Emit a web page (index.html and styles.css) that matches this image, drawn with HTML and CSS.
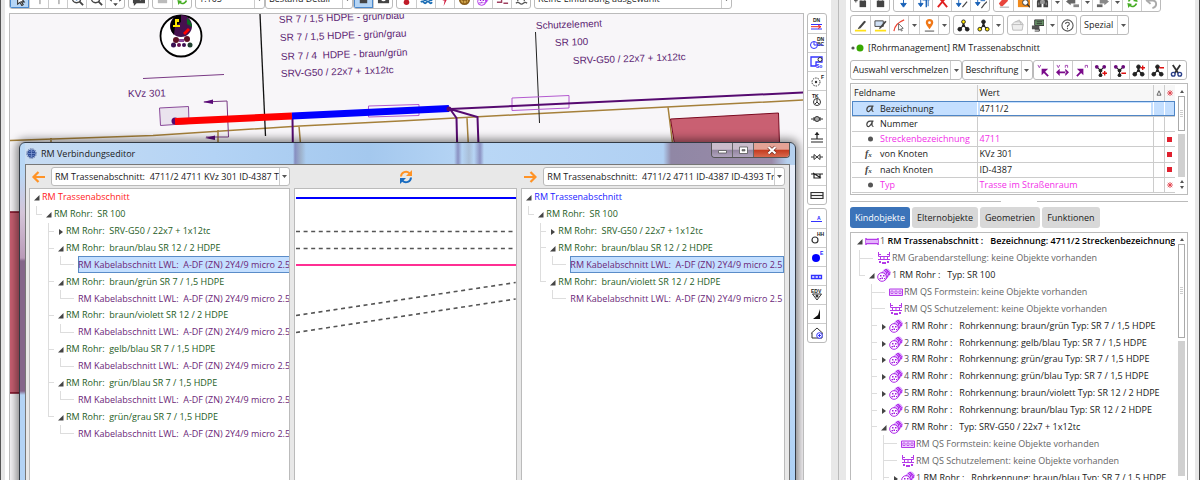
FILE: index.html
```html
<!DOCTYPE html>
<html lang="de">
<head>
<meta charset="utf-8">
<title>RM Verbindungseditor</title>
<link rel="stylesheet" href="styles.css">
</head>
<body>
<svg class="defs" aria-hidden="true">
  <defs>
    <symbol id="down" viewBox="0 0 5 3"><path d="M0 0h5L2.500 3z" fill="#555"/></symbol>
    <symbol id="open" viewBox="0 0 6 6"><path d="M5.500 0v5.500H0z" fill="#444"/></symbol>
    <symbol id="closed" viewBox="0 0 6 6"><path d="M1 0l4 3-4 3z" fill="#444"/></symbol>
    <symbol id="pipe" viewBox="0 0 14 14"><path d="M1 8L7 1.500Q10-.5 12.500 2T13 7l-5 6z" fill="#d9a0ff"/><path d="M5 4l2 2M7 2l3 3M9 1l3 3M4 5l7 4M8 1l5 6M11 3l-3 5M13 4l-4 7" stroke="#b02be8" stroke-width="1"/><circle cx="5" cy="9" r="4.300" fill="#fff" stroke="#b02be8" stroke-width="1"/><path d="M3 7h1.500v1.500H3zM6 7h1.500v1.500H6zM4.500 9.500H6V11H4.500zM2.500 10H4v1.200H2.500zM7 10h1v1H7z" fill="#a21be0"/></symbol>
    <symbol id="trasse" viewBox="0 0 14 14"><path d="M1 4v7M13 4v7M1 5.500h12M1 9.500h12" stroke="#b43ae8" stroke-width="1.500"/><path d="M1 6h12v3H1z" fill="#e3b3fb"/></symbol>
    <symbol id="graben" viewBox="0 0 14 14"><path d="M1.500 1v4.500h11V1M1 8.500h12" fill="none" stroke="#b43ae8"/><path d="M3 6h1v2H3zM6.500 6h1v2h-1zM10 6h1v2h-1zM2 10h2v2H2zM5 11h4v2H5zM10 10h2v2h-2zM1 3h3v1H1zM10 3h3v1h-3z" fill="#b43ae8"/></symbol>
    <symbol id="form" viewBox="0 0 14 14"><path d="M.5 4h13v6.500H.5z" fill="#f0d4ff" stroke="#b43ae8"/><path d="M2 6h2v2.500H2zM6 6h2v2.500H6zM10 6h2v2.500h-2z" fill="#fff" stroke="#b43ae8" stroke-width=".8"/></symbol>
    <symbol id="spin" viewBox="0 0 14 14"><path d="M2 6a5 5 0 0 1 8-3l1.500-2 1 5.500-5-1 1.300-1.200A3 3 0 0 0 4 6zM12 8a5 5 0 0 1-8 3l-1.500 2-1-5.500 5 1-1.300 1.200A3 3 0 0 0 10 8z" fill="#46ad24"/></symbol>
    <symbol id="nodes" viewBox="0 0 14 14"><path d="M7 3v4L3 11M7 7l4 4" fill="none" stroke="#222" stroke-width="1.200"/><circle cx="7" cy="3" r="2" class="n1"/><circle cx="7" cy="7" r="1.600" fill="#222"/><circle cx="3" cy="11" r="2" class="n2"/><circle cx="11" cy="11" r="2" class="n2"/></symbol>
    <symbol id="alpha" viewBox="0 0 10 8"><path d="M8.500 1.200H5Q2 1.500 1.800 4.500 2 7 4 6.500 6 5.500 7.500 1.200 6 6.500 8.500 6.500" fill="none" stroke="#444" stroke-width="1.200"/></symbol>
    <symbol id="star" viewBox="0 0 6 6"><path d="M3 0v6M0 3h6M.8.8l4.400 4.400M5.200.8L.8 5.200" stroke="#e0343f" stroke-width=".8"/></symbol>
  </defs>
</svg>

<div class="app">
  <main class="workspace">
    <div class="work">
      <div class="topbar">
        <div class="group">
          <button class="on" aria-label="Auswählen"><svg viewBox="0 0 14 14"><path d="M5 1v11l2.500-2 2 3.500 1.500-1L9 9.500h3z" fill="#fff" stroke="#333" stroke-width="1.200"/></svg></button>
          <button aria-label="Punkt"><svg viewBox="0 0 14 14"><path d="M7.500 1v11" stroke="#777"/></svg></button>
          <button aria-label="Linie"><svg viewBox="0 0 14 14"><path d="M7.500 1v11" stroke="#777"/></svg></button>
          <button aria-label="Vergrößern"><svg viewBox="0 0 14 14"><circle cx="6" cy="6" r="4.500" fill="#fff" stroke="#444" stroke-width="1.400"/><path d="M9 9l4 4" stroke="#444" stroke-width="2"/><path d="M6 4v4M4 6h4" stroke="#1769c4" stroke-width="1.500"/></svg></button>
          <button aria-label="Zoom"><svg viewBox="0 0 14 14"><circle cx="6" cy="6" r="4.500" fill="#fff" stroke="#444" stroke-width="1.400"/><path d="M9 9l4 4" stroke="#444" stroke-width="2"/></svg></button>
          <button aria-label="Verschieben"><svg viewBox="0 0 14 14"><path d="M7 0l2.500 3h-5zM7 14l-2.500-3h5zM0 7l3-2.500v5zM14 7l-3 2.500v-5z" fill="#444"/></svg></button>
        </div>
        <div class="group g1"><button aria-label="Kommentar"><svg viewBox="0 0 14 14"><path d="M1 1h13v10H5l-3 3v-3H1z" fill="#444"/><path d="M9 4v4M7 6h4" stroke="#fff"/></svg></button></div>
        <div class="group g1"><button aria-label="Stopp"><svg viewBox="0 0 14 14"><path d="M2 2h10v9H2z" fill="#bbb"/></svg></button><button aria-label="Aktualisieren"><svg><use href="#spin"/></svg></button></div>
        <div class="combo c1"><select aria-label="Maßstab"><option>1:105</option></select><span class="drop"><svg><use href="#down"/></svg></span></div>
        <div class="combo c2"><select aria-label="Ansicht"><option>Bestand Detail</option></select><span class="drop"><svg><use href="#down"/></svg></span></div>
        <div class="group"><button class="on" aria-label="Ebene"><svg viewBox="0 0 14 14"><path d="M3 2h8v9H3z" fill="#444"/></svg></button><button aria-label="Kamera"><svg viewBox="0 0 14 14"><path d="M1 2h12v9H1z" fill="#444"/><circle cx="7" cy="6.500" r="2.500" fill="#fff"/><circle cx="7" cy="6.500" r="1" fill="#444"/></svg></button></div>
        <div class="group g1">
          <button aria-label="Wärme"><svg viewBox="0 0 14 14"><path d="M7 0v8" stroke="#c01c28" stroke-width="3"/><circle cx="7" cy="10" r="3" fill="#c01c28"/></svg></button>
          <button aria-label="Wasser"><svg viewBox="0 0 14 14"><path d="M1 7q1.500-2 3 0t3 0 3 0 3 0M1 10q1.500-2 3 0t3 0 3 0 3 0" fill="none" stroke="#1a6db5" stroke-width="2"/></svg></button>
          <button aria-label="Strom"><svg viewBox="0 0 14 14"><path d="M10 0L7 6h2l-4 8 1-6H4l3-8z" fill="#d02040"/></svg></button>
          <button aria-label="Kanal"><svg viewBox="0 0 14 14"><circle cx="7" cy="7" r="5" fill="#cfa44a" stroke="#8b5e1a" stroke-width="2"/><path d="M4 5h6M4 8h6M6 4v7M9 4v7" stroke="#805010" stroke-width=".7"/></svg></button>
          <button aria-label="Rohr"><svg><use href="#pipe"/></svg></button>
          <button aria-label="Trasse"><svg viewBox="0 0 14 14"><path d="M1 10h5V5h4M8 11h5M3 6h2" stroke="#a04060" fill="none" stroke-width="1.500"/></svg></button>
          <button aria-label="Schnitt"><svg viewBox="0 0 14 14"><path d="M1 5h12M3 5v4M10 5v4M1 11q2-2 4 0t4 0 4 0" fill="none" stroke="#555" stroke-width="1.300"/></svg></button>
        </div>
        <div class="combo c3"><select aria-label="Einfärbung"><option>Keine Einfärbung ausgewählt</option></select><span class="drop"><svg><use href="#down"/></svg></span></div>
      </div>

      <div class="stage">
        <div class="map">
          <svg class="plan" role="img" aria-label="Lageplan">
            <g transform="translate(-10 -14)" fill="none">
              <path d="M10 140.500L153 135.500 300 126 400 121 520 114.500 804 100M51 138v24M218 130v34M299 126l3 36M467 118l2 40M668 107l5 40" stroke="#a5803a" stroke-width="1.500"/>
              <path d="M670.500 119L778.500 113 780 160H677z" fill="#c96072" stroke="#7a0a20"/>
              <path d="M0 212h24v181H0z" fill="#c96072" stroke="#7a0a20" stroke-width="1.500"/>
              <path d="M260 14L265.500 136" stroke="#111" stroke-width="1.300"/>
              <path d="M535.500 32L539.500 123" stroke="#222"/>
              <path d="M143 78.500L224 74.500" stroke="#7a3a85"/>
              <path d="M159.500 108L188.500 106.500 189 123.500 160.500 125.500z" fill="#eae3ee" stroke="#8a4a9a"/>
              <path d="M204 102L227 101 228.500 137H206" stroke="#7a3a85"/>
              <path d="M203 102l10-2.500v4.500zM205 138l10-2.500v4.500z" fill="#5a0a78"/>
              <path d="M512 98L569 95.500V108L512 110.500zM368.500 106L419 104.500V115.500L368.500 117z" stroke="#b45ad0"/>
              <path d="M450 109L804 92.500" stroke="#560a70" stroke-width="2"/>
              <path d="M292.500 118L293 160M450 109L456.500 118 457.500 160M450 109L477.500 117 479 160" stroke="#560a70" stroke-width="2"/>
              <circle cx="175" cy="121" r="3.500" fill="#560a70"/>
              <path d="M175 121.500L292 116" stroke="#f00" stroke-width="7"/>
              <path d="M292 116L449 108.500" stroke="#00f" stroke-width="7"/>
              <circle cx="449" cy="109" r="2.500" fill="#560a70"/>
              <circle cx="181" cy="36" r="20.500" fill="#fff" stroke="#000" stroke-width="1.800"/>
              <circle cx="181" cy="26" r="11" fill="#47104f"/>
              <path d="M171 22q4-8 10-7v7l-6 4-1 9q-5-5-3-13z" fill="#000"/>
              <path d="M175 19h4v3h-2v3h3v2h-7v-2h2z" fill="#ffe600"/><path d="M187 18q5 4 5 9l-5-3z" fill="#0a6a20"/><path d="M183 33l5-5 2 2-5 5z" fill="#f00"/>
              <path d="M176 37h10v6h-10z" fill="#fff"/><circle cx="176" cy="40" r="3" fill="#5e1025"/><circle cx="187" cy="39" r="3" fill="#5e1025"/>
              <path d="M179 39h5v3h-5z" fill="#8a4a9a"/><circle cx="173.500" cy="45" r="2.500" fill="#3a1050"/><circle cx="179" cy="45" r="2" fill="#6a1050"/><circle cx="184" cy="45" r="2" fill="#3a1050"/><circle cx="190" cy="45" r="2.500" fill="#204030"/>
              <g class="maptext">
                <text transform="translate(279 23) rotate(-2)">SR 7 / 1,5 HDPE - grün/blau</text>
                <text transform="translate(280 41) rotate(-2)">SR 7 / 1,5 HDPE - grün/grau</text>
                <text transform="translate(281 60) rotate(-2)" xml:space="preserve">SR 7 / 4  HDPE - braun/grün</text>
                <text transform="translate(281 77) rotate(-2)">SRV-G50 / 22x7 + 1x12tc</text>
                <text transform="translate(128 97) rotate(-1)">KVz 301</text>
                <text transform="translate(536 29) rotate(-2)">Schutzelement</text>
                <text transform="translate(555 46) rotate(-2)">SR 100</text>
                <text transform="translate(573 64) rotate(-2)">SRV-G50 / 22x7 + 1x12tc</text>
              </g>
            </g>
          </svg>

          <section class="dialog" aria-label="RM Verbindungseditor">
            <header class="titlebar">
              <svg class="logo" viewBox="0 0 12 12"><circle cx="6" cy="6" r="4.500" fill="#2c4a94"/><circle cx="6" cy="6" r="5.200" fill="none" stroke="#40508a" stroke-dasharray="1 1"/><path d="M3 4q3-2 6 0M2 6h8M3 8q3 2 6 0M6 2v8" fill="none" stroke="#8aa4dc" stroke-width=".7"/></svg>
              <h1>RM Verbindungseditor</h1>
              <div class="winctl">
                <button aria-label="Minimieren"><svg viewBox="0 0 20 14"><path d="M6.500 7.500h8v2.500h-8z" fill="#fff" stroke="#555" stroke-width=".8"/></svg></button>
                <button aria-label="Maximieren"><svg viewBox="0 0 20 14"><path d="M6.500 4h8v6.500h-8z" fill="#fff" stroke="#555" stroke-width=".8"/><path d="M9 6.500h3v1.500H9z" fill="#777" stroke="#555" stroke-width=".6"/></svg></button>
                <button class="x" aria-label="Schließen"><svg viewBox="0 0 20 14"><path d="M6.500 4l7 6.500M13.500 4l-7 6.500" stroke="#6b2a22" stroke-width="3.400"/><path d="M6.500 4l7 6.500M13.500 4l-7 6.500" stroke="#fff" stroke-width="2.200"/></svg></button>
              </div>
            </header>
            <div class="panes">
              <div class="pane">
                <div class="pick">
                  <button class="bare" aria-label="Zurück"><svg viewBox="0 0 14 14"><path d="M7.500 2L2.500 7l5 5M3 7h11" fill="none" stroke="#ff9326" stroke-width="2.200"/></svg></button>
                  <div class="combo"><select aria-label="Trassenabschnitt links"><option>RM Trassenabschnitt:&nbsp; 4711/2 4711 KVz 301 ID-4387 T</option></select><span class="drop"><svg><use href="#down"/></svg></span></div>
                </div>
                <div class="box">
                  <ul class="tree t15">
                    <li class="red"><svg><use href="#open"/></svg>RM Trassenabschnitt</li>
                    <li><i class="l"></i><svg><use href="#open"/></svg>RM Rohr:  SR 100</li>
                    <li><i></i><i class="t"></i><svg><use href="#closed"/></svg>RM Rohr:  SRV-G50 / 22x7 + 1x12tc</li>
                    <li><i></i><i class="t"></i><svg><use href="#open"/></svg>RM Rohr:  braun/blau SR 12 / 2 HDPE</li>
                    <li class="leaf sel"><i></i><i class="v"></i><i class="l"></i><i class="h"></i><span>RM Kabelabschnitt LWL:  A-DF (ZN) 2Y4/9 micro 2.5</span></li>
                    <li><i></i><i class="t"></i><svg><use href="#open"/></svg>RM Rohr:  braun/grün SR 7 / 1,5 HDPE</li>
                    <li class="leaf"><i></i><i class="v"></i><i class="l"></i><i class="h"></i><span>RM Kabelabschnitt LWL:  A-DF (ZN) 2Y4/9 micro 2.5</span></li>
                    <li><i></i><i class="t"></i><svg><use href="#open"/></svg>RM Rohr:  braun/violett SR 12 / 2 HDPE</li>
                    <li class="leaf"><i></i><i class="v"></i><i class="l"></i><i class="h"></i><span>RM Kabelabschnitt LWL:  A-DF (ZN) 2Y4/9 micro 2.5</span></li>
                    <li><i></i><i class="t"></i><svg><use href="#open"/></svg>RM Rohr:  gelb/blau SR 7 / 1,5 HDPE</li>
                    <li class="leaf"><i></i><i class="v"></i><i class="l"></i><i class="h"></i><span>RM Kabelabschnitt LWL:  A-DF (ZN) 2Y4/9 micro 2.5</span></li>
                    <li><i></i><i class="t"></i><svg><use href="#open"/></svg>RM Rohr:  grün/blau SR 7 / 1,5 HDPE</li>
                    <li class="leaf"><i></i><i class="v"></i><i class="l"></i><i class="h"></i><span>RM Kabelabschnitt LWL:  A-DF (ZN) 2Y4/9 micro 2.5</span></li>
                    <li><i></i><i class="l"></i><svg><use href="#open"/></svg>RM Rohr:  grün/grau SR 7 / 1,5 HDPE</li>
                    <li class="leaf"><i></i><i></i><i class="l"></i><i class="h"></i><span>RM Kabelabschnitt LWL:  A-DF (ZN) 2Y4/9 micro 2.5</span></li>
                  </ul>
                </div>
              </div>
              <div class="pane">
                <div class="pick mid">
                  <button class="bare" aria-label="Neu verbinden"><svg viewBox="0 0 14 14"><path d="M2 6.500a5 5 0 0 1 8.500-3.300" fill="none" stroke="#ff9326" stroke-width="2"/><path d="M13 0v6H7z" fill="#ff9326"/><path d="M12 7.500a5 5 0 0 1-8.500 3.300" fill="none" stroke="#1a6cc0" stroke-width="2"/><path d="M1 14V8h6z" fill="#1a6cc0"/></svg></button>
                </div>
                <div class="box">
                  <svg class="links" viewBox="0 0 222 160" preserveAspectRatio="none">
                    <path d="M1 9h221" stroke="#00f" stroke-width="2"/>
                    <path d="M1 42.500h220M1 59.500h220M1 126.500L221 93.500M1 143.500L221 110" stroke="#555" stroke-width="1.600" stroke-dasharray="4 3.600"/>
                    <path d="M1 76h221" stroke="#ff2f93" stroke-width="2"/>
                  </svg>
                </div>
              </div>
              <div class="pane">
                <div class="pick">
                  <button class="bare" aria-label="Weiter"><svg viewBox="0 0 14 14"><path d="M7.500 2l5 5-5 5M12 7H1" fill="none" stroke="#ff9326" stroke-width="2.200"/></svg></button>
                  <div class="combo"><select aria-label="Trassenabschnitt rechts"><option>RM Trassenabschnitt:&nbsp; 4711/2 4711 ID-4387 ID-4393 Tr</option></select><span class="drop"><svg><use href="#down"/></svg></span></div>
                </div>
                <div class="box">
                  <ul class="tree t7">
                    <li class="blue"><svg><use href="#open"/></svg>RM Trassenabschnitt</li>
                    <li><i class="l"></i><svg><use href="#open"/></svg>RM Rohr:  SR 100</li>
                    <li><i></i><i class="t"></i><svg><use href="#closed"/></svg>RM Rohr:  SRV-G50 / 22x7 + 1x12tc</li>
                    <li><i></i><i class="t"></i><svg><use href="#open"/></svg>RM Rohr:  braun/blau SR 12 / 2 HDPE</li>
                    <li class="leaf sel"><i></i><i class="v"></i><i class="l"></i><i class="h"></i><span>RM Kabelabschnitt LWL:  A-DF (ZN) 2Y4/9 micro 2.5</span></li>
                    <li><i></i><i class="l"></i><svg><use href="#open"/></svg>RM Rohr:  braun/violett SR 12 / 2 HDPE</li>
                    <li class="leaf"><i></i><i></i><i class="l"></i><i class="h"></i><span>RM Kabelabschnitt LWL:  A-DF (ZN) 2Y4/9 micro 2.5</span></li>
                  </ul>
                </div>
              </div>
            </div>
          </section>
        </div>

        <div class="sidebar">
          <div class="vgroup">
            <button aria-label="DN"><svg viewBox="0 0 16 16"><text x="4" y="6" class="mini">DN</text><path d="M2 8.500h11M2 13h11" stroke="#33f"/><path d="M2 10.700h9M9 9l3 1.700L9 12.500" stroke="#e22" fill="none"/></svg></button>
            <button aria-label="DN Punkt"><svg viewBox="0 0 16 16"><text x="8" y="6" class="mini">DN</text><text x="8" y="11" class="mini">BC</text><circle cx="5" cy="10" r="3.500" fill="#fff" stroke="#33f"/><path d="M5 10h9M5 7v3" stroke="#33f"/></svg></button>
            <button aria-label="Schacht"><svg viewBox="0 0 16 16"><path d="M2 12V3h11v5H7v4z" fill="none" stroke="#33f" stroke-width="1.300"/><circle cx="11" cy="5.500" r="2" fill="#fff" stroke="#333"/><text x="7" y="14" class="mini b">So</text></svg></button>
            <button aria-label="Punkt F"><svg viewBox="0 0 16 16"><circle cx="7" cy="9" r="4" fill="none" stroke="#333" stroke-dasharray="1.500 1"/><circle cx="7" cy="9" r="1.200" fill="#333"/><text x="12" y="6" class="mini">F</text></svg></button>
            <button aria-label="TK"><svg viewBox="0 0 16 16"><text x="3" y="6" class="mini">TK</text><circle cx="8" cy="10" r="3.500" fill="none" stroke="#333"/><path d="M8 7v3l-2 2M8 10l2 2" fill="none" stroke="#333"/></svg></button>
            <button aria-label="Muffe"><svg viewBox="0 0 16 16"><path d="M2 8h12M5 6v4M11 6v4" stroke="#333"/><circle cx="8" cy="8" r="2.500" fill="#aaa" stroke="#333"/></svg></button>
            <button aria-label="Abschluss"><svg viewBox="0 0 16 16"><path d="M2 9h12M2 12h12M8 9V2.500" stroke="#222" stroke-width="1.200"/><path d="M5.500 5L8 2l2.500 3z" fill="#222"/></svg></button>
            <button aria-label="Verbinder"><svg viewBox="0 0 16 16"><path d="M2 8h3M11 8h3" stroke="#333"/><path d="M5 5.500v5L8 8zM11 5.500v5L8 8z" fill="none" stroke="#333"/></svg></button>
            <button aria-label="Trenner"><svg viewBox="0 0 16 16"><path d="M2 6h3v4h6V6h3M4 5l8 5M5 6h6" fill="none" stroke="#222" stroke-width="1.200"/></svg></button>
            <button aria-label="Kasten"><svg viewBox="0 0 16 16"><path d="M2 5.500h12v6H2zM2 8.500h12" fill="#eee" stroke="#333" stroke-width="1.200"/></svg></button>
          </div>
          <div class="vgroup">
            <button aria-label="Linie A"><svg viewBox="0 0 16 16"><text x="8" y="9" class="mini b">A</text><path d="M2 10.500h11" stroke="#33f"/></svg></button>
            <button aria-label="Punkt HH"><svg viewBox="0 0 16 16"><circle cx="6" cy="10" r="3" fill="none" stroke="#333" stroke-width="1.200"/><text x="8" y="6" class="mini">HH</text></svg></button>
            <button aria-label="Punkt E"><svg viewBox="0 0 16 16"><circle cx="7" cy="9" r="4" fill="#00f"/><text x="11" y="6" class="mini b">E</text></svg></button>
            <button aria-label="Trog"><svg viewBox="0 0 16 16"><path d="M2.500 7.500h10v3h-10zM6 7.500v3M9.500 7.500v3" fill="none" stroke="#33f" stroke-width="1.300"/></svg></button>
            <button aria-label="EDV"><svg viewBox="0 0 16 16"><text x="2" y="6" class="mini">EDV</text><path d="M3.500 7h9L8 13z" fill="#fff" stroke="#333"/><circle cx="8" cy="9" r="1.500" fill="#333"/></svg></button>
            <button aria-label="Winkel"><svg viewBox="0 0 16 16"><path d="M11 3v10H4l5-4z" fill="#111"/></svg></button>
            <button aria-label="Haus"><svg viewBox="0 0 16 16"><path d="M3 13V8h-.5L8 3l5.500 5H13v5z" fill="#fff" stroke="#333"/><circle cx="10.500" cy="10.500" r="2.800" fill="#fff" stroke="#33f"/><path d="M9 10.500h3M10.500 9v3" stroke="#33f"/></svg></button>
          </div>
        </div>
      </div>
    </div>
  </main>

  <div class="splitter"></div>

  <aside class="panel">
    <div class="topbar">
      <div class="group">
        <button aria-label="Sperre hinzufügen"><svg viewBox="0 0 14 14"><path d="M6 5h7v7H6z" fill="#444"/><path d="M7.500 5V3h4v2M2 3v4M0 5h4" fill="none" stroke="#444"/></svg></button>
        <button aria-label="Sperre"><svg viewBox="0 0 14 14"><path d="M3 5h8v7H3z" fill="#444"/><path d="M5 5V2h4v3" fill="none" stroke="#444"/></svg></button>
      </div>
      <div class="group g1">
        <button aria-label="Ab"><svg viewBox="0 0 14 14"><path d="M7 0v9M4 8h6l-3 4z" fill="#1a62b8" stroke="#1a62b8"/></svg></button>
        <button aria-label="Ab und auf"><svg viewBox="0 0 14 14"><path d="M4 1v8M1.500 8h5L4 11.500z" fill="#1a62b8" stroke="#1a62b8"/><path d="M6 4h4v8" fill="none" stroke="#1a62b8" stroke-width="1.500"/><path d="M12 2v9M10 4h4l-2-3z" fill="#1a62b8" stroke="#1a62b8"/></svg></button>
        <button aria-label="Löschen"><svg viewBox="0 0 14 14"><path d="M2 0l10 12M12 0L2 12" stroke="#e02020" stroke-width="2"/></svg></button>
        <button aria-label="Ab auf Linie"><svg viewBox="0 0 14 14"><path d="M4 0v9M1.500 8h5L4 11.500z" fill="#1a62b8" stroke="#1a62b8"/><path d="M8 12l5-6" stroke="#444" stroke-width="1.300"/></svg></button>
        <button aria-label="Ab auf Knoten"><svg viewBox="0 0 14 14"><path d="M4 0v8M1.500 7h5L4 10.500zM7 5h5" fill="#1a62b8" stroke="#1a62b8"/><path d="M8 13l3-4 3-3" stroke="#444" fill="none" stroke-width="1.300"/></svg></button>
      </div>
      <div class="group g1">
        <button aria-label="Radieren"><svg viewBox="0 0 14 14"><path d="M2 8l6-7 4 4-6 6H4z" fill="#e8453c"/><path d="M3 12h10" stroke="#999"/></svg></button>
        <button aria-label="Ordner durchsuchen"><svg viewBox="0 0 14 14"><path d="M1 1h13v11H1z" fill="#f08a1c"/><circle cx="9" cy="7" r="3" fill="#fff" stroke="#333"/><path d="M11 9l3 3" stroke="#333" stroke-width="1.500"/></svg></button>
        <button aria-label="Suchen"><svg viewBox="0 0 14 14"><path d="M3 1h3v11H1V6zM8 1h3l2 5v6H8z" fill="#444"/><path d="M5 5h4v3H5zM3 7v3M11 7v3" fill="#999" stroke="#999"/></svg></button>
        <button class="dd" aria-label="Suchoptionen"><svg><use href="#down"/></svg></button>
        <button aria-label="Vorheriges"><svg viewBox="0 0 14 14"><path d="M0 6l5-4v2h5v4H5v2z" fill="#666"/><path d="M8 9h6v3H8z" fill="#888"/></svg></button>
        <button class="dd" aria-label="Vorheriges wählen"><svg><use href="#down"/></svg></button>
        <button aria-label="Nächstes"><svg viewBox="0 0 14 14"><path d="M14 6L9 2v2H4v4h5v2z" fill="#888"/><path d="M1 9h6v3H1z" fill="#666"/></svg></button>
        <button class="dd" aria-label="Nächstes wählen"><svg><use href="#down"/></svg></button>
        <button aria-label="Neu laden"><svg><use href="#spin"/></svg></button>
        <button aria-label="Rückgängig"><svg viewBox="0 0 14 14"><path d="M6 1L2 5l4 3.500M2 5h6q4 0 4 4 0 3-4 4" fill="none" stroke="#aaa" stroke-width="2"/></svg></button>
      </div>
    </div>

    <div class="bar">
      <div class="group">
        <button aria-label="Stift"><svg viewBox="0 0 14 14"><path d="M1 12.500h12" stroke="#ffe11a" stroke-width="2"/><path d="M5 9l6-7 2 1-6 7-3 1z" fill="#444"/></svg></button>
        <button aria-label="Formular"><svg viewBox="0 0 14 14"><path d="M1 12.500h12" stroke="#ffe11a" stroke-width="2"/><path d="M1 2h9v6H1z" fill="#cfe0f5" stroke="#444"/><path d="M6 9l6-7 1.500 1-6 7-2 1z" fill="#444"/></svg></button>
        <button aria-label="Linie wählen"><svg viewBox="0 0 14 14"><path d="M1 13Q2 5 12 1" fill="none" stroke="#e43" stroke-width="1.300"/><path d="M6 5v7l2-1 1 2 1-.5-1-2 2-.5z" fill="#fff" stroke="#444" stroke-width=".8"/></svg></button>
        <button class="dd" aria-label="Linienoptionen"><svg><use href="#down"/></svg></button>
        <button aria-label="Ort"><svg viewBox="0 0 14 14"><path d="M7 11Q3 6 3 4a4 4 0 0 1 8 0q0 2-4 7z" fill="#f07818"/><circle cx="7" cy="4" r="1.500" fill="#fff"/><path d="M2 13h10" stroke="#444"/></svg></button>
        <button class="dd" aria-label="Ortsoptionen"><svg><use href="#down"/></svg></button>
      </div>
      <div class="group g1">
        <button aria-label="Oberer Knoten"><svg class="yt"><use href="#nodes"/></svg></button>
        <button aria-label="Untere Knoten"><svg class="yb"><use href="#nodes"/></svg></button>
        <button class="dd" aria-label="Knotenoptionen"><svg><use href="#down"/></svg></button>
      </div>
      <div class="group g1">
        <button aria-label="Paket"><svg viewBox="0 0 14 14"><path d="M1 6l3-3h7l2 3-1 6H2z" fill="#eee" stroke="#bbb"/><path d="M1 6h12M5 3l4-2 2 5" fill="none" stroke="#bbb"/></svg></button>
        <button aria-label="Drucken"><svg viewBox="0 0 14 14"><path d="M4 1h10v6H4z" fill="#6c9a6c" stroke="#333"/><path d="M1 7h8v4H1z" fill="#555"/><path d="M4 11h5v2H4M6 3h6M6 5h6" stroke="#333" fill="none"/></svg></button>
        <button class="dd" aria-label="Druckoptionen"><svg><use href="#down"/></svg></button>
        <button aria-label="Hilfe"><svg viewBox="0 0 14 14"><circle cx="7" cy="7" r="6" fill="#fff" stroke="#555" stroke-width="1.200"/><path d="M5 5.500Q5 3.500 7 3.500t2 1.800Q9 6.500 7 7.500V8.500M7 9.500v1.500" fill="none" stroke="#555" stroke-width="1.200"/></svg></button>
      </div>
      <div class="group g1"><button class="txt">Spezial</button><button class="dd" aria-label="Spezial wählen"><svg><use href="#down"/></svg></button></div>
    </div>

    <p class="status"><svg viewBox="0 0 14 8"><circle cx="3" cy="4" r="1.600" fill="#555"/><circle cx="10" cy="4" r="3.500" fill="#38a800"/></svg>[Rohrmanagement] RM Trassenabschnitt</p>

    <div class="bar tight">
      <div class="group"><button class="txt">Auswahl verschmelzen</button><button class="dd" aria-label="Auswahl verschmelzen wählen"><svg><use href="#down"/></svg></button></div>
      <div class="group"><button class="txt">Beschriftung</button><button class="dd" aria-label="Beschriftung wählen"><svg><use href="#down"/></svg></button></div>
      <div class="group">
        <button aria-label="Zum Anfang"><svg viewBox="0 0 14 14"><path d="M1 1l1.500 3L4 1" fill="none" stroke="#a040b0"/><path d="M12 13L7 8" stroke="#7a0a8a" stroke-width="2"/><path d="M5 5h7l-7 7z" fill="#7a0a8a"/></svg></button>
        <button aria-label="Beidseitig"><svg viewBox="0 0 14 14"><path d="M1 1l1.500 3L4 1M10 4V1.500h2.500V4" fill="none" stroke="#a040b0"/><path d="M0 9l4-4v8zM14 9l-4-4v8zM3 8h8v2H3z" fill="#7a0a8a"/></svg></button>
        <button aria-label="Zum Ende"><svg viewBox="0 0 14 14"><path d="M11 4V1.500h2.500V4" fill="none" stroke="#a040b0"/><path d="M2 13l5-5" stroke="#7a0a8a" stroke-width="2"/><path d="M9 5H2l7 7z" fill="#7a0a8a"/></svg></button>
        <button aria-label="Eingang hinzufügen"><svg viewBox="0 0 14 14"><path d="M3 3l4 4 4-4M7 7v4" fill="none" stroke="#222" stroke-width="1.200"/><circle cx="3" cy="3" r="2" fill="#6a0a7a"/><circle cx="11" cy="3" r="2" fill="#6a0a7a"/><circle cx="7" cy="7" r="2" fill="#222"/><circle cx="7" cy="12" r="2" fill="#222"/><path d="M9 10h5M11.500 7.500v5" stroke="#d11" stroke-width="1.500"/></svg></button>
        <button aria-label="Eingang entfernen"><svg viewBox="0 0 14 14"><path d="M3 3l4 4 4-4M7 7v4" fill="none" stroke="#222" stroke-width="1.200"/><circle cx="3" cy="3" r="2" fill="#6a0a7a"/><circle cx="11" cy="3" r="2" fill="#6a0a7a"/><circle cx="7" cy="7" r="2" fill="#222"/><circle cx="7" cy="12" r="2" fill="#222"/><path d="M9 10h5" stroke="#d11" stroke-width="1.500"/></svg></button>
        <button aria-label="Ausgang hinzufügen"><svg viewBox="0 0 14 14"><use href="#nodes"/><path d="M9 4h5M11.500 1.500v5" stroke="#d11" stroke-width="1.500"/></svg></button>
        <button aria-label="Ausgang entfernen"><svg viewBox="0 0 14 14"><use href="#nodes"/><path d="M9 4h5" stroke="#d11" stroke-width="1.500"/></svg></button>
        <button aria-label="Schneiden"><svg viewBox="0 0 14 14"><path d="M3 1l6 9M11 1L5 10" stroke="#333" stroke-width="2"/><circle cx="3.500" cy="11" r="2" fill="#fff" stroke="#2a3f8a" stroke-width="1.500"/><circle cx="10.500" cy="11" r="2" fill="#fff" stroke="#2a3f8a" stroke-width="1.500"/></svg></button>
      </div>
    </div>

    <div class="fields">
      <table>
        <colgroup><col class="k"><col><col class="s"><col class="s"></colgroup>
        <thead><tr><th>Feldname</th><th>Wert</th><th class="ic"><svg viewBox="0 0 6 6"><path d="M3 .8L5 5.200H1z" fill="none" stroke="#666"/></svg></th><th class="ic"><svg><use href="#star"/></svg></th></tr></thead>
        <tbody>
          <tr class="cur"><td><svg><use href="#alpha"/></svg><label for="bez">Bezeichnung</label></td><td><input id="bez" value="4711/2"></td><td></td><td></td></tr>
          <tr><td><svg><use href="#alpha"/></svg>Nummer</td><td></td><td></td><td></td></tr>
          <tr class="pink"><td><svg viewBox="0 0 10 8"><circle cx="5.500" cy="4" r="2.500" fill="#555"/></svg>Streckenbezeichnung</td><td>4711</td><td></td><td class="ic"><b></b></td></tr>
          <tr><td><em>f<small>x</small></em>von Knoten</td><td>KVz 301</td><td></td><td class="ic"><b></b></td></tr>
          <tr><td><em>f<small>x</small></em>nach Knoten</td><td>ID-4387</td><td></td><td class="ic"><b></b></td></tr>
          <tr class="pink"><td><svg viewBox="0 0 10 8"><circle cx="5.500" cy="4" r="2.500" fill="#555"/></svg>Typ</td><td>Trasse im Straßenraum</td><td></td><td class="ic"><svg><use href="#star"/></svg></td></tr>
        </tbody>
      </table>
      <div class="scroll"><span class="up"></span><span class="thumb"></span><span class="track"></span><span class="up"></span><span class="dn"></span></div>
    </div>

    <div class="rule"><span></span><span></span></div>

    <nav class="tabs"><button class="on">Kindobjekte</button><button>Elternobjekte</button><button>Geometrien</button><button>Funktionen</button></nav>

    <div class="objects">
      <ul class="tree t15 wide">
        <li><svg><use href="#open"/></svg><svg class="ico"><use href="#trasse"/></svg><s>1</s><strong> RM Trassenabschnitt :   Bezeichnung: 4711/2 Streckenbezeichnung</strong></li>
        <li class="none"><i class="t"></i><i class="h"></i><svg class="ico"><use href="#graben"/></svg>RM Grabendarstellung: keine Objekte vorhanden</li>
        <li><i class="l"></i><svg><use href="#open"/></svg><svg class="ico"><use href="#pipe"/></svg><s>1</s> RM Rohr :   Typ: SR 100</li>
        <li class="none"><i></i><i class="t"></i><i class="h"></i><svg class="ico"><use href="#form"/></svg>RM QS Formstein: keine Objekte vorhanden</li>
        <li class="none"><i></i><i class="t"></i><i class="h"></i><svg class="ico"><use href="#graben"/></svg>RM QS Schutzelement: keine Objekte vorhanden</li>
        <li><i></i><i class="t"></i><svg><use href="#closed"/></svg><svg class="ico"><use href="#pipe"/></svg><s>1</s> RM Rohr :   Rohrkennung: braun/grün Typ: SR 7 / 1,5 HDPE</li>
        <li><i></i><i class="t"></i><svg><use href="#closed"/></svg><svg class="ico"><use href="#pipe"/></svg><s>2</s> RM Rohr :   Rohrkennung: gelb/blau Typ: SR 7 / 1,5 HDPE</li>
        <li><i></i><i class="t"></i><svg><use href="#closed"/></svg><svg class="ico"><use href="#pipe"/></svg><s>3</s> RM Rohr :   Rohrkennung: grün/grau Typ: SR 7 / 1,5 HDPE</li>
        <li><i></i><i class="t"></i><svg><use href="#closed"/></svg><svg class="ico"><use href="#pipe"/></svg><s>4</s> RM Rohr :   Rohrkennung: grün/blau Typ: SR 7 / 1,5 HDPE</li>
        <li><i></i><i class="t"></i><svg><use href="#closed"/></svg><svg class="ico"><use href="#pipe"/></svg><s>5</s> RM Rohr :   Rohrkennung: braun/violett Typ: SR 12 / 2 HDPE</li>
        <li><i></i><i class="t"></i><svg><use href="#closed"/></svg><svg class="ico"><use href="#pipe"/></svg><s>6</s> RM Rohr :   Rohrkennung: braun/blau Typ: SR 12 / 2 HDPE</li>
        <li><i></i><i class="t"></i><svg><use href="#open"/></svg><svg class="ico"><use href="#pipe"/></svg><s>7</s> RM Rohr :   Typ: SRV-G50 / 22x7 + 1x12tc</li>
        <li class="none"><i></i><i class="v"></i><i class="t"></i><i class="h"></i><svg class="ico"><use href="#form"/></svg>RM QS Formstein: keine Objekte vorhanden</li>
        <li class="none"><i></i><i class="v"></i><i class="t"></i><i class="h"></i><svg class="ico"><use href="#graben"/></svg>RM QS Schutzelement: keine Objekte vorhanden</li>
        <li><i></i><i class="v"></i><i class="t"></i><svg><use href="#closed"/></svg><svg class="ico"><use href="#pipe"/></svg><s>1</s> RM Rohr :   Rohrkennung: braun/blau Typ: SR 7 / 1,5 HDPE</li>
      </ul>
      <div class="scroll tall"><span class="up"></span><span class="thumb"></span><span class="track"></span></div>
    </div>
  </aside>
</div>
</body>
</html>
```
FILE: styles.css
```css
* { box-sizing: border-box; }
body { margin: 0; height: 100vh; overflow: hidden; background: #fff; color: #1a1a1a; font: 9px/12px "Open Sans", "Noto Sans", sans-serif; }
button, select, input { font: inherit; color: inherit; margin: 0; padding: 0; border: 0; background: none; border-radius: 0; }
h1, p, ul { margin: 0; padding: 0; list-style: none; }
svg { display: block; }
.defs { position: absolute; width: 0; height: 0; }

.app { display: flex; height: 100vh; border-left: 1px solid #555; border-right: 1px solid #444; }
.workspace { flex: 1; min-width: 0; border-left: 4px solid #e6e6e6; display: flex; }
.work { flex: 1; min-width: 0; display: flex; flex-direction: column; padding: 0 4px; }
.splitter { width: 15px; background: linear-gradient(90deg, #e8e8e8 7px, #bbb 7px, #bbb 8px, #e8e8e8 8px); }
.panel { width: 353px; padding: 0 4px 0 4px; border-right: 4px solid #e8e8e8; display: flex; flex-direction: column; height: 100vh; }

/* toolbars */
.topbar { height: 13px; flex: none; display: flex; align-items: flex-end; padding-bottom: 4px; }
.panel .topbar { height: 12px; padding: 0; }
.topbar > * { flex: none; }
.group, .vgroup { border: 1px solid #bbb; border-radius: 3px; background: #fff; display: flex; overflow: hidden; }
.group { height: 20px; }
.group button { width: 19px; display: grid; place-items: center; border-left: 1px solid #ccc; }
.group button:first-child { border-left: 0; }
.group button svg { width: 13px; height: 13px; }
.group .dd { width: 11px; }
.group .dd svg, .drop svg { width: 5px; height: 3px; }
.group .txt { width: auto; padding: 0 4px 0 3px; white-space: nowrap; }
.group .on { background: #b5d5f5; outline: 1px solid #4a88cc; outline-offset: -1px; }
.g1 { margin-left: 3px; }
.bar { display: flex; flex: none; margin-top: 3px; }
.bar.tight { margin-top: 2px; }
.tight .group .txt { padding: 0 2px; }
.yt { --a: #ffe600; --b: #222; }
.yb { --a: #222; --b: #ffe600; }
.n1 { fill: var(--a, #222); stroke: #222; stroke-width: 1px; }
.n2 { fill: var(--b, #222); stroke: #222; stroke-width: 1px; }

.combo { display: flex; height: 20px; border: 1px solid #bbb; border-radius: 3px; background: #fff; overflow: hidden; }
.combo select { appearance: none; flex: 1; min-width: 0; padding: 0 0 0 3px; overflow: hidden; text-overflow: clip; }
.drop { width: 10px; border-left: 1px solid #ccc; display: grid; place-items: center; }
.c1 { width: 70px; margin-left: 3px; }
.c2 { width: 88px; }
.c3 { width: 198px; margin-left: 3px; }

/* map */
.stage { flex: 1; display: flex; min-height: 0; }
.map { flex: 1; min-width: 0; position: relative; overflow: hidden; background: #f8f6f9; border: 1px solid #bbb; border-bottom: 0; }
.plan { width: 100%; height: 100%; }
.maptext { font: 10px "Liberation Sans", sans-serif; fill: #5c2472; }
.sidebar { margin-left: 3px; width: 20px; display: flex; flex-direction: column; gap: 3px; }
.vgroup { flex-direction: column; }
.vgroup button { height: 19px; border-top: 1px solid #ccc; display: grid; place-items: center; }
.vgroup button:first-child { border-top: 0; }
.vgroup svg { width: 16px; height: 16px; }
.mini { font: bold 5px "Liberation Sans", sans-serif; fill: #222; }
.mini.b { fill: #22f; }

/* dialog window over the map */
.dialog { position: absolute; left: 9px; right: 7px; top: 128px; bottom: -8px; display: flex; flex-direction: column; padding: 0 5px; border: 1px solid #333a44; border-radius: 6px 6px 0 0; box-shadow: 0 0 8px 3px rgba(0, 0, 0, .45);
  background:
    linear-gradient(#e8eefa, #a6cdf5) right 0 top 22px / 5px 100% no-repeat,
    linear-gradient(#b9d7f5 30px, #d4c4d8 70px, #b99ab8 115px, #84658a 118px, #84658a 248px, #b3d3f5 252px) left / 5px 100% no-repeat,
    linear-gradient(90deg, transparent 273px, rgba(110, 100, 160, .6) 275px, rgba(140, 140, 150, .4) 281px, transparent 286px),
    linear-gradient(90deg, transparent 434px, rgba(110, 100, 160, .6) 438px, transparent 442px, rgba(140, 140, 150, .3) 449px, transparent 454px, rgba(110, 100, 160, .6) 460px, transparent 464px),
    linear-gradient(90deg, #c8dcf2, #b3d3f5 25%, #a4c8ee 45%, #b9d7f6 60%, #b0d0f3 83%, #9087a5 84%, #9a8aa8 97%, #b5d0ee 99%); }
.titlebar { height: 21px; flex: none; display: flex; align-items: center; padding-left: 1px; gap: 4px; }
.logo { width: 11px; height: 11px; }
.titlebar h1 { font: inherit; flex: 1; }
.winctl { display: flex; align-self: flex-start; height: 15px; border: 1px solid #555; border-top: 0; border-radius: 0 0 4px 4px; overflow: hidden; }
.winctl button { width: 21px; border-right: 1px solid #666; background: linear-gradient(#c9bccb 45%, #9385a0 50%, #b0a3bd); }
.winctl .x { width: 35px; border: 0; background: linear-gradient(#e3a295 45%, #c43a1e 50%, #d8694e); }
.winctl svg { width: 20px; height: 14px; margin: auto; }
.panes { flex: 1; min-height: 0; display: grid; grid-template-columns: 261fr 224fr 264fr; gap: 4px; padding: 2px 4px 0 3px; background: #e8e8e8; border: 1px solid #777; border-bottom: 0; }
.pane { min-width: 0; display: flex; flex-direction: column; }
.pick { display: flex; align-items: center; height: 19px; margin-bottom: 2px; gap: 6px; }
.pick .combo { flex: 1; height: 19px; min-width: 0; }
.pick.mid { justify-content: center; }
.bare { padding-left: 2px; width: 16px; }
.bare svg { width: 14px; height: 14px; }
.box { flex: 1; min-height: 0; background: #fff; border: 1px solid #bbb; overflow: hidden; }
.links { width: 100%; height: 160px; }

/* trees */
.tree { display: grid; grid-auto-rows: 1fr; overflow: hidden; white-space: pre; color: #1e5c1e; }
.t15 { height: 253px; }
.t7 { height: 118px; }
.tree li { display: flex; align-items: center; min-width: 0; }
.tree svg { flex: none; width: 6px; height: 6px; margin: 2px 2px 0 4px; }
.tree i { flex: none; width: 12px; align-self: stretch; background: no-repeat; --c: linear-gradient(#ddd, #ddd); }
.tree .v { background-image: var(--c); background-size: 1px 100%; background-position: 6px 0; }
.tree .t { background-image: var(--c), var(--c); background-size: 1px 100%, 6px 1px; background-position: 6px 0, 6px 50%; }
.tree .l { background-image: var(--c), var(--c); background-size: 1px 50%, 6px 1px; background-position: 6px 0, 6px 50%; }
.tree .h { background-image: var(--c); background-size: 8px 1px; background-position: 0 50%; }
.tree .red { color: #f22; }
.tree .blue { color: #22f; }
.leaf { color: #6b1f78; }
.leaf span { flex: 1; align-self: stretch; display: flex; align-items: center; }
.leaf.sel span { background: #c4dfff; box-shadow: inset 0 0 0 1px #5a8cc8; }
.wide { flex: 1; min-width: 0; padding-left: 2px; color: #1a1a1a; }
.tree .ico { width: 14px; height: 14px; margin: 0 1px 0 0; }
.wide s { color: #555; text-decoration: none; }
.wide strong { font-weight: 600; color: #000; }
.wide .none { color: #666; }

/* attribute panel */
.status { display: flex; align-items: center; gap: 4px; height: 20px; margin-top: 3px; flex: none; }
.status svg { width: 14px; height: 8px; }
.fields { display: flex; flex: none; margin-top: 3px; margin-right: 3px; border: 1px solid #bbb; padding: 1px 2px 1px 1px; }
.fields table { flex: 1; min-width: 0; table-layout: fixed; width: 0; border-collapse: collapse; height: 108px; }
.k { width: 125px; }
.s { width: 11px; }
th, td { padding: 0 2px; font-weight: normal; text-align: left; white-space: nowrap; border-bottom: 1px solid #ccc; border-right: 1px solid #ccc; line-height: 12px; overflow: hidden; }
th { background: #f7f7f7; height: 16px; }
th:last-child, td:last-child { border-right: 0; }
td:first-child { padding-left: 13px; }
td:first-child svg { display: inline-block; width: 10px; height: 8px; margin-right: 5px; vertical-align: -1px; }
em { display: inline-block; width: 15px; font: italic bold 10px/10px "Liberation Serif", serif; color: #444; }
em small { font-size: 7px; }
.ic svg { width: 6px; height: 6px; }
.ic b { display: block; width: 5px; height: 5px; background: #e0202e; }
.cur { background: #c4dfff; outline: 1px solid #4f86c6; outline-offset: -1px; }
.cur td { border-right-color: transparent; }
.cur input { width: 100%; background: #fff; height: 12px; display: block; }
.pink { color: #f22fe8; }
.scroll { width: 7px; flex: none; margin-left: 3px; display: flex; flex-direction: column; align-items: center; gap: 3px; padding: 5px 0 4px; }
.up, .dn { border: 2px solid transparent; }
.up { border-bottom: 3px solid #555; border-top: 0; }
.dn { border-top: 3px solid #555; border-bottom: 0; }
.thumb { width: 7px; height: 35px; border: 1px solid #aaa; background: repeating-linear-gradient(#ccc 0 1px, #fff 1px 2px) center / 3px 8px no-repeat; }
.track { width: 7px; flex: 1; background: #d0d0d0; }
.rule { display: flex; gap: 36px; margin: 6px 3px 5px 0; flex: none; }
.rule span { flex: 1; height: 1px; background: #bbb; }
.tabs { display: flex; flex: none; gap: 2px; }
.tabs button { height: 21px; padding: 0 5px; border-radius: 3px; background: #d8d8d8; }
.tabs .on { background: #3b73b9; color: #fff; }
.objects { flex: 1; min-height: 0; display: flex; margin: 4px 3px 0 0; border: 1px solid #bbb; border-bottom: 0; padding-right: 2px; overflow: hidden; }
.tall .thumb { height: 94px; flex: none; }
```
